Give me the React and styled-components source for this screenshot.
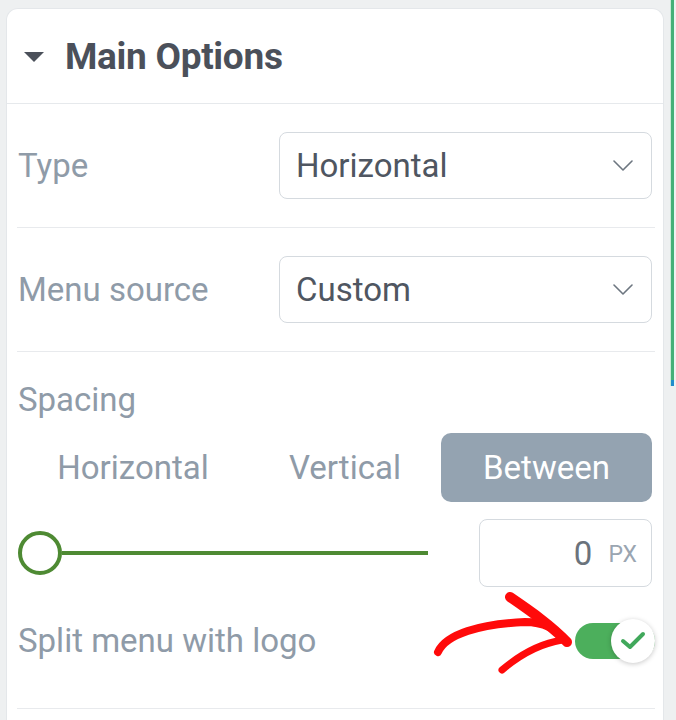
import React from 'react';
import styled, { createGlobalStyle } from 'styled-components';

const Global = createGlobalStyle`
  html, body {
    margin: 0;
    padding: 0;
    background: #eef0f1;
    font-family: Roboto, "Liberation Sans", Arial, sans-serif;
  }
`;

const Page = styled.div`
  position: relative;
  display: flex;
  height: 720px;
  overflow: hidden;
`;

const Panel = styled.div`
  width: 658px;
  box-sizing: border-box;
  margin: 8px 0 0 6px;
  min-height: 740px;
  background: #fff;
  border: 1px solid #e4e7ea;
  border-bottom: none;
  border-radius: 12px 12px 0 0;
`;

const Rail = styled.div`
  flex: 1;
  display: flex;
  padding-left: 6px;
`;

const Accent = styled.div`
  width: 3px;
  height: 386px;
  background: linear-gradient(#45b078 0 380px, #1f8dcc 380px 386px);
  border-left: 1px solid #c8ead7;
`;

const Header = styled.div`
  height: 94px;
  display: flex;
  align-items: center;
  gap: 21px;
  padding-left: 17px;
  border-bottom: 1px solid #e6e9ec;
`;

const Caret = styled.span`
  width: 0;
  height: 0;
  border-left: 10px solid transparent;
  border-right: 10px solid transparent;
  border-top: 10px solid #4b505a;
  margin-top: 2px;
`;

const Title = styled.h2`
  margin: 0;
  font-size: 37px;
  font-weight: 700;
  color: #4b505a;
  letter-spacing: -0.3px;
`;

const Body = styled.div`
  padding: 0 8px 0 10px;
`;

const Row = styled.div`
  height: 123px;
  display: flex;
  align-items: center;
  justify-content: space-between;
`;

const Divider = styled.div`
  height: 1px;
  background: #e8eaed;
`;

const Label = styled.span`
  font-size: 33px;
  line-height: 40px;
  color: #8f9ba8;
  padding-left: 1px;
`;

const Select = styled.div`
  width: 373px;
  height: 67px;
  box-sizing: border-box;
  margin-right: 3px;
  display: flex;
  align-items: center;
  justify-content: space-between;
  padding: 0 18px 0 16px;
  border: 1px solid #d5dadf;
  border-radius: 8px;
  font-size: 33px;
  color: #4f5661;
`;

const Chevron = () => (
  <svg width="20" height="11" viewBox="0 0 20 11" fill="none">
    <path d="M1 1 L10 10 L19 1" stroke="#6d7680" strokeWidth="1.6" strokeLinecap="round" strokeLinejoin="round" />
  </svg>
);

const Spacing = styled.div`
  padding-top: 28px;
`;

const Tabs = styled.div`
  display: grid;
  grid-template-columns: 232px 192px 1fr;
  height: 69px;
  margin-top: 13px;
`;

const Tab = styled.div`
  display: flex;
  align-items: center;
  justify-content: center;
  font-size: 33px;
  border-radius: 10px;
  color: ${p => (p.active ? '#fff' : '#8f9ba8')};
  background: ${p => (p.active ? '#94a3b1' : 'transparent')};
  margin-right: ${p => (p.active ? '3px' : '0')};
`;

const SliderRow = styled.div`
  display: flex;
  align-items: center;
  height: 68px;
  margin-top: 17px;
  padding-left: 1px;
`;

const Slider = styled.div`
  width: 410px;
  display: flex;
  align-items: center;
`;

const Thumb = styled.span`
  width: 44px;
  height: 44px;
  box-sizing: border-box;
  border-radius: 50%;
  border: 4px solid #4e8a33;
  background: #fff;
`;

const Track = styled.span`
  flex: 1;
  height: 4px;
  background: #4e8a33;
`;

const NumberBox = styled.div`
  margin-left: 51px;
  width: 173px;
  height: 68px;
  box-sizing: border-box;
  border: 1px solid #d5dadf;
  border-radius: 8px;
  display: flex;
  align-items: center;
  justify-content: flex-end;
  gap: 16px;
  padding-right: 14px;
`;

const Value = styled.span`
  font-size: 33px;
  color: #6b737c;
`;

const Unit = styled.span`
  font-size: 23px;
  color: #9aa5b1;
  margin-top: 2px;
`;

const ToggleRow = styled.div`
  display: flex;
  align-items: center;
  justify-content: space-between;
  height: 36px;
  margin: 36px 0 49px;
`;

const Toggle = styled.div`
  position: relative;
  width: 80px;
  height: 36px;
  border-radius: 18px;
  background: #4caf5c;
`;

const Knob = styled.span`
  position: absolute;
  right: 0;
  top: -4px;
  width: 44px;
  height: 44px;
  border-radius: 50%;
  background: #fff;
  box-shadow: 0 1px 5px rgba(0, 0, 0, 0.22);
  display: flex;
  align-items: center;
  justify-content: center;
`;

const Arrow = styled.svg`
  position: absolute;
  left: 420px;
  top: 580px;
  pointer-events: none;
`;

function SelectRow({ label, value }) {
  return (
    <Row>
      <Label>{label}</Label>
      <Select>
        <span>{value}</span>
        <Chevron />
      </Select>
    </Row>
  );
}

export default function App() {
  return (
    <Page>
      <Global />
      <Panel>
        <Header>
          <Caret />
          <Title>Main Options</Title>
        </Header>
        <Body>
          <SelectRow label="Type" value="Horizontal" />
          <Divider />
          <SelectRow label="Menu source" value="Custom" />
          <Divider />
          <Spacing>
            <Label>Spacing</Label>
            <Tabs>
              <Tab>Horizontal</Tab>
              <Tab>Vertical</Tab>
              <Tab active>Between</Tab>
            </Tabs>
            <SliderRow>
              <Slider>
                <Thumb />
                <Track />
              </Slider>
              <NumberBox>
                <Value>0</Value>
                <Unit>PX</Unit>
              </NumberBox>
            </SliderRow>
            <ToggleRow>
              <Label>Split menu with logo</Label>
              <Toggle>
                <Knob>
                  <svg width="26" height="20" viewBox="0 0 26 20" fill="none">
                    <path d="M3 10 L10 16 L23 3" stroke="#41a85b" strokeWidth="4" strokeLinecap="round" strokeLinejoin="round" />
                  </svg>
                </Knob>
              </Toggle>
            </ToggleRow>
          </Spacing>
          <Divider />
        </Body>
      </Panel>
      <Rail>
        <Accent />
      </Rail>
      <Arrow width="160" height="100" viewBox="0 0 160 100" fill="none">
        <path d="M18 72 C 26 54, 60 44, 105 42 C 125 42, 138 50, 147 62" stroke="#ff0a0a" strokeWidth="8" strokeLinecap="round" />
        <path d="M90 17 C 112 32, 132 46, 147 62" stroke="#ff0a0a" strokeWidth="10" strokeLinecap="round" />
        <path d="M142 60 C 118 64, 96 78, 82 90" stroke="#ff0a0a" strokeWidth="7" strokeLinecap="round" />
      </Arrow>
    </Page>
  );
}
